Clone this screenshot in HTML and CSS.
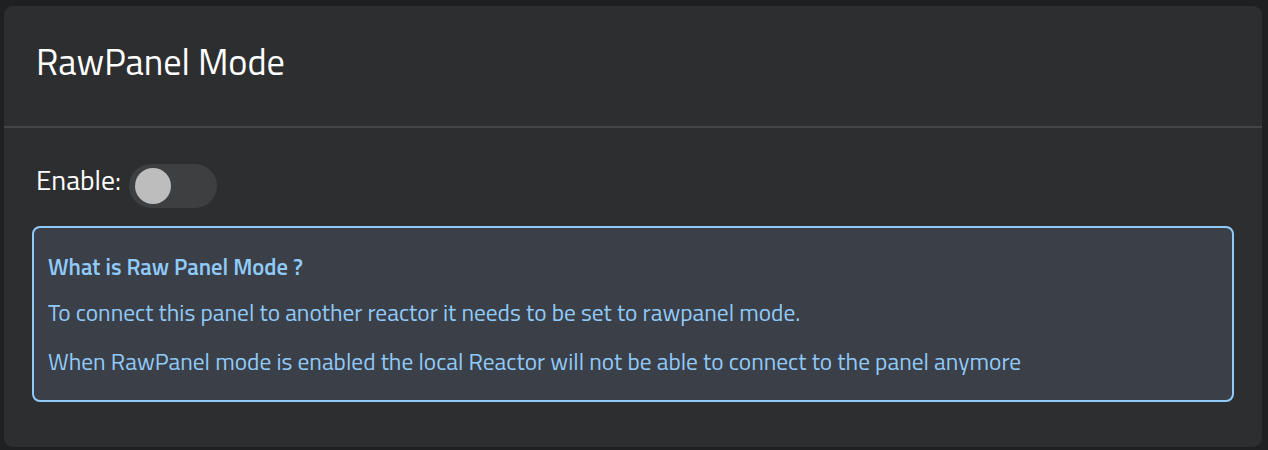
FILE: index.html
```html
<!DOCTYPE html>
<html lang="en">
<head>
<meta charset="utf-8">
<title>RawPanel Mode</title>
<link rel="stylesheet" href="styles.css">
</head>
<body>
<section class="card">
  <header class="card-header">
    <h1 class="card-title">RawPanel Mode</h1>
  </header>
  <div class="card-body">
    <div class="enable-row">
      <span class="enable-label">Enable:</span>
      <span class="switch" role="switch" aria-checked="false"><span class="switch-knob"></span></span>
    </div>
    <div class="info-box">
      <h2 class="info-title">What is Raw Panel Mode ?</h2>
      <p class="info-text">To connect this panel to another reactor it needs to be set to rawpanel mode.</p>
      <p class="info-text">When RawPanel mode is enabled the local Reactor will not be able to connect to the panel anymore</p>
    </div>
  </div>
</section>
</body>
</html>
```
FILE: styles.css
```css
html, body {
  margin: 0;
  background: #1f2022;
}
body {
  padding: 6px 6px 3px 4px;
  font-family: "Titillium Web", "Liberation Sans", sans-serif;
}
.card {
  background: #2d2e30;
  border-radius: 9px;
  padding-bottom: 45px;
}
.card-header {
  padding: 28.5px 32px 37.5px;
  border-bottom: 2px solid #444547;
}
.card-title {
  margin: 0;
  font-size: 36.3px;
  font-weight: 400;
  line-height: 54px;
  color: #ffffff;
}
.card-body {
  padding: 0 28px;
}
.enable-row {
  display: flex;
  align-items: flex-start;
  gap: 8px;
  margin: 31.5px 0 0 4px;
}
.enable-label {
  font-size: 27.7px;
  line-height: 41.5px;
  color: #ffffff;
}
.switch {
  position: relative;
  width: 88px;
  height: 44px;
  margin-top: 4.5px;
  border-radius: 22px;
  background: #3e3f41;
}
.switch-knob {
  position: absolute;
  left: 6px;
  top: 4px;
  width: 36px;
  height: 36px;
  border-radius: 50%;
  background: #bdbdbd;
}
.info-box {
  margin-top: 18px;
  padding: 21.5px 14px 21.5px;
  border: 2px solid #90caf9;
  border-radius: 8px;
  background: #3b3f47;
  color: #90caf9;
}
.info-title {
  margin: 0 0 12px;
  font-size: 22.6px;
  font-weight: 600;
  line-height: 1.5;
}
.info-text {
  margin: 0 0 13px;
  font-size: 23.4px;
  line-height: 1.5;
}
.info-text:last-child {
  margin-bottom: 0;
}
```
